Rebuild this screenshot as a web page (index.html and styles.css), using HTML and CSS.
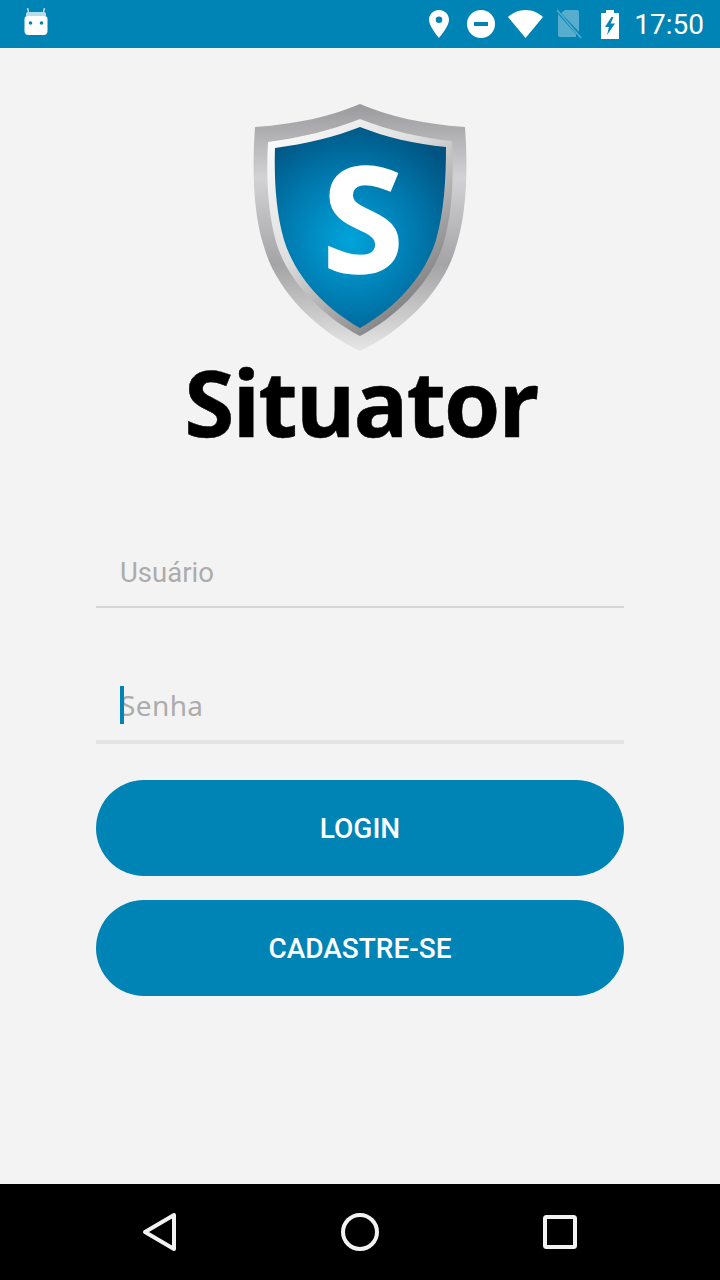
FILE: index.html
```html
<!DOCTYPE html>
<html lang="en">
<head>
    <meta charset="UTF-8">
    <meta name="viewport" content="width=device-width, initial-scale=1.0">
    <title>Situator</title>
    <link rel="stylesheet" href="styles.css">
</head>
<body>
    <div class="app">
        <header class="status-bar">
            <svg class="status-cat" width="24" height="30" viewBox="0 0 24 30">
                <path d="M5 7 L3.500 1 M19 7 L20.500 1" stroke="#b5dcea" stroke-width="1.500" fill="none"/>
                <path d="M2 7 Q2 5 4 5 H20 Q22 5 22 7 V9 H2Z" fill="#b5dcea"/>
                <path d="M0.500 12 Q0.500 9 3.500 9 H20.500 Q23.500 9 23.500 12 V24 Q23.500 28 19.500 28 H4.500 Q0.500 28 0.500 24Z" fill="#fff"/>
                <circle cx="6.500" cy="16" r="1.800" fill="#0083b5"/>
                <circle cx="17.500" cy="16" r="1.800" fill="#0083b5"/>
            </svg>
            <div class="status-right">
                <svg width="20" height="28" viewBox="0 0 20 28">
                    <path fill-rule="evenodd" d="M10 0 C4.500 0 0 4.300 0 9.800 C0 16.500 10 28 10 28 C10 28 20 16.500 20 9.800 C20 4.300 15.500 0 10 0Z M10 6.500 A3.300 3.300 0 1 1 10 13.100 A3.300 3.300 0 1 1 10 6.500Z" fill="#fff"/>
                </svg>
                <svg class="gap-dnd" width="28" height="28" viewBox="0 0 28 28">
                    <path fill-rule="evenodd" d="M14 0 A14 14 0 1 1 14 28 A14 14 0 1 1 14 0Z M7 12 V16 H21 V12Z" fill="#fff"/>
                </svg>
                <svg class="gap-wifi" width="35" height="28" viewBox="0 0 35 28">
                    <path d="M17.500 28 L0 7 C4.500 2.800 10.500 0 17.500 0 C24.500 0 30.500 2.800 35 7Z" fill="#fff"/>
                </svg>
                <svg class="gap-sim" width="26" height="30" viewBox="0 0 26 30">
                    <path d="M9 1 H21 Q23 1 23 3 V23 L5 4Z M2 5 L20 25 V28 H4 Q2 28 2 26Z" fill="#fff" opacity="0.340"/>
                    <path d="M1 1 L25 29" stroke="#fff" stroke-width="1.500" opacity="0.340"/>
                </svg>
                <svg class="gap-battery" width="20" height="29" viewBox="0 0 20 29">
                    <path fill-rule="evenodd" d="M6 0 H14 V3 H19 V29 H1 V3 H6Z M11.500 7 L5 17 H9 L7 25 L15 13.500 H10.500 L13.500 7Z" fill="#fff"/>
                </svg>
                <span class="status-time">17:50</span>
            </div>
        </header>

        <main class="login">
            <div class="logo">
                <svg class="shield" width="240" height="256" viewBox="240 100 240 256">
                    <defs>
                        <linearGradient id="rim" x1="0" y1="0" x2="0" y2="1">
                            <stop offset="0" stop-color="#9a9a9c"/>
                            <stop offset="0.300" stop-color="#d2d2d4"/>
                            <stop offset="0.650" stop-color="#a4a4a6"/>
                            <stop offset="1" stop-color="#e6e6e6"/>
                        </linearGradient>
                        <linearGradient id="edge" x1="0" y1="0" x2="0.800" y2="1">
                            <stop offset="0" stop-color="#ffffff"/>
                            <stop offset="0.450" stop-color="#dedede"/>
                            <stop offset="1" stop-color="#6e6e70"/>
                        </linearGradient>
                        <radialGradient id="blue" gradientUnits="userSpaceOnUse" cx="350" cy="240" r="125">
                            <stop offset="0" stop-color="#00a4db"/>
                            <stop offset="0.550" stop-color="#0078ad"/>
                            <stop offset="1" stop-color="#00527f"/>
                        </radialGradient>
                    </defs>
                    <path d="M360 104 C332 116 298 124 255 127 C252 170 253 215 265 250 C277 290 315 330 360 351 C405 330 443 290 455 250 C467 215 468 170 465 127 C422 124 388 116 360 104Z" fill="url(#rim)"/>
                    <path d="M360 119 C332 130 300 138 268 142 C266 180 268 215 277 245 C289 282 322 316 360 336 C398 316 431 282 443 245 C452 215 454 180 452 141 C420 138 388 130 360 119Z" fill="url(#edge)"/>
                    <path d="M360 127 C335 137 305 144 275 148 C274 180 276 212 284 240 C296 278 325 308 360 328 C395 308 424 278 436 240 C444 212 446 180 446 147 C415 144 385 137 360 127Z" fill="url(#blue)"/>
                    <text class="shield-letter" x="363" y="273" text-anchor="middle">S</text>
                </svg>
                <div class="wordmark">Situator</div>
            </div>

            <form class="login-form">
                <div class="field field-user">
                    <input type="text" placeholder="Usuário">
                </div>
                <div class="field field-pass">
                    <input type="text" placeholder="Senha">
                    <span class="caret"></span>
                </div>
                <button type="button" class="btn btn-login">LOGIN</button>
                <button type="button" class="btn">CADASTRE-SE</button>
            </form>
        </main>

        <nav class="nav-bar">
            <svg width="40" height="40" viewBox="0 0 40 40">
                <path d="M34 3 V37 L5 20Z" fill="none" stroke="#f2f2f2" stroke-width="4" stroke-linejoin="round"/>
            </svg>
            <svg width="40" height="40" viewBox="0 0 40 40">
                <circle cx="20" cy="20" r="17" fill="none" stroke="#f2f2f2" stroke-width="4"/>
            </svg>
            <svg width="40" height="40" viewBox="0 0 40 40">
                <rect x="5" y="5" width="30" height="30" rx="1.500" fill="none" stroke="#f2f2f2" stroke-width="4"/>
            </svg>
        </nav>
    </div>
</body>
</html>
```

FILE: styles.css
```css
* {
    box-sizing: border-box;
}
body {
    margin: 0;
    font-family: Roboto, sans-serif;
    background-color: #f3f3f3;
}
.app {
    display: flex;
    flex-direction: column;
    height: 1280px;
}
.status-bar {
    display: flex;
    align-items: center;
    justify-content: space-between;
    height: 48px;
    padding: 0 16px 0 24px;
    background-color: #0083b5;
}
.status-cat {
    margin-bottom: 4px;
}
.status-right {
    display: flex;
    align-items: center;
}
.gap-dnd {
    margin-left: 18px;
}
.gap-wifi {
    margin-left: 13px;
}
.gap-sim {
    margin-left: 13px;
}
.gap-battery {
    margin-left: 18px;
}
.status-time {
    margin-left: 14px;
    font-size: 28px;
    color: #fff;
}
.login {
    flex: 1;
    padding-top: 52px;
}
.logo {
    display: flex;
    flex-direction: column;
    align-items: center;
}
.shield {
    display: block;
}
.shield-letter {
    font-family: "Open Sans", sans-serif;
    font-weight: 700;
    font-size: 148px;
    fill: #fff;
    stroke: #fff;
    stroke-width: 1.500px;
}
.wordmark {
    margin-top: -4px;
    margin-left: 2px;
    font-family: "Open Sans", sans-serif;
    font-weight: 700;
    font-size: 91px;
    letter-spacing: -2px;
    line-height: 100px;
    color: #000;
    -webkit-text-stroke: 0.500px #000;
}
.login-form {
    display: flex;
    flex-direction: column;
    margin-top: 84px;
    padding: 0 96px;
}
.field {
    position: relative;
}
.field input {
    display: block;
    width: 100%;
    height: 72px;
    padding: 2px 24px 0;
    border: none;
    border-bottom: 2px solid #d6d6d6;
    background: none;
    font-family: Roboto, sans-serif;
    font-size: 27.500px;
    outline: none;
}
.field input::placeholder {
    color: #acacac;
    opacity: 1;
}
.field-pass {
    margin-top: 62px;
}
.field-pass input {
    height: 74px;
    padding-top: 0;
    border-bottom: 4px solid #e4e4e4;
    font-family: "Noto Sans", sans-serif;
    font-size: 28px;
    letter-spacing: 0.400px;
}
.caret {
    position: absolute;
    left: 24px;
    top: 16px;
    width: 4px;
    height: 38px;
    background-color: #0083b5;
}
.btn {
    height: 96px;
    margin-top: 24px;
    padding-top: 2px;
    border: none;
    border-radius: 48px;
    background-color: #0083b5;
    color: #fff;
    font-family: Roboto, sans-serif;
    font-size: 28px;
    font-weight: 500;
    cursor: pointer;
}
.btn-login {
    margin-top: 36px;
}
.nav-bar {
    display: flex;
    align-items: center;
    justify-content: space-between;
    height: 96px;
    padding: 0 140px;
    background-color: #000;
}
```
